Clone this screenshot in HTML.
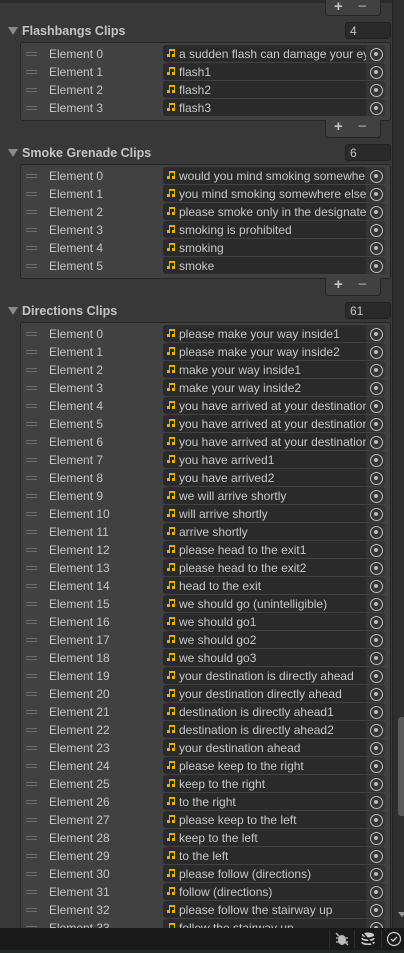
<!DOCTYPE html><html><head><style>
html,body{margin:0;width:404px;height:953px;overflow:hidden}
body{background:#383838;position:relative;font-family:"Liberation Sans",sans-serif;font-size:12px;color:#c4c4c4}
div{box-sizing:border-box}
.a{position:absolute}
.tab{left:0;top:0;width:392px;height:3px;background:#2b2b2b}
.hdr{left:8px;font-weight:bold;font-size:12.5px;color:#c4c4c4}
.hdr:before{content:"";display:inline-block;border-left:5px solid transparent;border-right:5px solid transparent;border-top:8px solid #8a8a8a;margin-right:4px;vertical-align:0px}
.cnt{left:345px;width:46px;height:17px;background:#2a2a2a;border:1px solid #212121;border-radius:3px;padding:1px 0 0 4px}
.box{left:20px;width:371px;background:#414141;border:1px solid #262626;border-radius:3px}
.foot{left:325px;width:56px;height:18px;background:#414141;border:1px solid #262626;border-top:none;border-radius:0 0 4px 4px;font-size:15px;font-weight:bold}
.foot span{position:absolute;top:-2px}
.r{position:absolute;left:0;width:369px;height:18px}
.r .h{position:absolute;left:5px;top:7px;width:11px;height:4px;border-top:1px solid #6e6e6e;border-bottom:1px solid #6e6e6e}
.r .l{position:absolute;left:28px;top:2px}
.r .f{position:absolute;left:142px;top:0;width:222px;height:17px;background:#2a2a2a;border-radius:3px;overflow:hidden;white-space:nowrap;padding:2px 0 0 16px;color:#c8c8c8}
.r .f:before{content:"";position:absolute;left:6px;top:4px;width:6px;height:7px;border-top:2px solid #e8b100;border-left:1.5px solid #e8b100;border-right:1.5px solid #e8b100;box-sizing:border-box}
.r .f:after{content:"";position:absolute;left:4px;top:9px;width:3px;height:3px;background:#e8b100;box-shadow:5px 0 0 #e8b100}
.r .p{position:absolute;left:345px;top:0;width:19px;height:17px;background:#353535;border-radius:0 3px 3px 0}
.r .p:before{content:"";position:absolute;left:4px;top:3px;width:11px;height:11px;border:1px solid #bdbdbd;border-radius:50%}
.r .p:after{content:"";position:absolute;left:7.5px;top:6.5px;width:4px;height:4px;background:#bdbdbd;border-radius:50%}
.ft{position:absolute;left:0;top:928px;width:404px;height:22px;background:#191919}
</style></head><body>
<div class="a tab"></div>
<div class="a" style="left:392px;top:0;width:12px;height:928px;background:#2e2e2e;border-left:1px solid #242424"></div>
<div class="a" style="left:398px;top:717px;width:6px;height:99px;background:#5a5a5a;border-radius:3px 0 0 3px"></div>
<div class="a foot" style="top:0;height:16px"><span style="left:8px">+</span><span style="left:32px;color:#8a8a8a">−</span></div>

<div class="a hdr" style="top:24px">Flashbangs Clips</div>
<div class="a cnt" style="top:22px">4</div>
<div class="a box" style="top:42px;height:79px">
<div class="r" style="top:2px"><div class="h"></div><div class="l">Element 0</div><div class="f">a sudden flash can damage your eyes</div><div class="p"></div></div>
<div class="r" style="top:20px"><div class="h"></div><div class="l">Element 1</div><div class="f">flash1</div><div class="p"></div></div>
<div class="r" style="top:38px"><div class="h"></div><div class="l">Element 2</div><div class="f">flash2</div><div class="p"></div></div>
<div class="r" style="top:56px"><div class="h"></div><div class="l">Element 3</div><div class="f">flash3</div><div class="p"></div></div>
</div>
<div class="a foot" style="top:120px"><span style="left:8px">+</span><span style="left:32px;color:#8a8a8a">−</span></div>

<div class="a hdr" style="top:146px">Smoke Grenade Clips</div>
<div class="a cnt" style="top:144px">6</div>
<div class="a box" style="top:164px;height:115px">
<div class="r" style="top:2px"><div class="h"></div><div class="l">Element 0</div><div class="f">would you mind smoking somewhere else</div><div class="p"></div></div>
<div class="r" style="top:20px"><div class="h"></div><div class="l">Element 1</div><div class="f">you mind smoking somewhere else</div><div class="p"></div></div>
<div class="r" style="top:38px"><div class="h"></div><div class="l">Element 2</div><div class="f">please smoke only in the designated</div><div class="p"></div></div>
<div class="r" style="top:56px"><div class="h"></div><div class="l">Element 3</div><div class="f">smoking is prohibited</div><div class="p"></div></div>
<div class="r" style="top:74px"><div class="h"></div><div class="l">Element 4</div><div class="f">smoking</div><div class="p"></div></div>
<div class="r" style="top:92px"><div class="h"></div><div class="l">Element 5</div><div class="f">smoke</div><div class="p"></div></div>
</div>
<div class="a foot" style="top:278px"><span style="left:8px">+</span><span style="left:32px;color:#8a8a8a">−</span></div>

<div class="a hdr" style="top:304px">Directions Clips</div>
<div class="a cnt" style="top:302px">61</div>
<div class="a box" style="top:322px;height:606px;overflow:hidden;border-bottom:none;border-radius:3px 3px 0 0">
<div class="r" style="top:2px"><div class="h"></div><div class="l">Element 0</div><div class="f">please make your way inside1</div><div class="p"></div></div>
<div class="r" style="top:20px"><div class="h"></div><div class="l">Element 1</div><div class="f">please make your way inside2</div><div class="p"></div></div>
<div class="r" style="top:38px"><div class="h"></div><div class="l">Element 2</div><div class="f">make your way inside1</div><div class="p"></div></div>
<div class="r" style="top:56px"><div class="h"></div><div class="l">Element 3</div><div class="f">make your way inside2</div><div class="p"></div></div>
<div class="r" style="top:74px"><div class="h"></div><div class="l">Element 4</div><div class="f">you have arrived at your destination1</div><div class="p"></div></div>
<div class="r" style="top:92px"><div class="h"></div><div class="l">Element 5</div><div class="f">you have arrived at your destination2</div><div class="p"></div></div>
<div class="r" style="top:110px"><div class="h"></div><div class="l">Element 6</div><div class="f">you have arrived at your destination3</div><div class="p"></div></div>
<div class="r" style="top:128px"><div class="h"></div><div class="l">Element 7</div><div class="f">you have arrived1</div><div class="p"></div></div>
<div class="r" style="top:146px"><div class="h"></div><div class="l">Element 8</div><div class="f">you have arrived2</div><div class="p"></div></div>
<div class="r" style="top:164px"><div class="h"></div><div class="l">Element 9</div><div class="f">we will arrive shortly</div><div class="p"></div></div>
<div class="r" style="top:182px"><div class="h"></div><div class="l">Element 10</div><div class="f">will arrive shortly</div><div class="p"></div></div>
<div class="r" style="top:200px"><div class="h"></div><div class="l">Element 11</div><div class="f">arrive shortly</div><div class="p"></div></div>
<div class="r" style="top:218px"><div class="h"></div><div class="l">Element 12</div><div class="f">please head to the exit1</div><div class="p"></div></div>
<div class="r" style="top:236px"><div class="h"></div><div class="l">Element 13</div><div class="f">please head to the exit2</div><div class="p"></div></div>
<div class="r" style="top:254px"><div class="h"></div><div class="l">Element 14</div><div class="f">head to the exit</div><div class="p"></div></div>
<div class="r" style="top:272px"><div class="h"></div><div class="l">Element 15</div><div class="f">we should go (unintelligible)</div><div class="p"></div></div>
<div class="r" style="top:290px"><div class="h"></div><div class="l">Element 16</div><div class="f">we should go1</div><div class="p"></div></div>
<div class="r" style="top:308px"><div class="h"></div><div class="l">Element 17</div><div class="f">we should go2</div><div class="p"></div></div>
<div class="r" style="top:326px"><div class="h"></div><div class="l">Element 18</div><div class="f">we should go3</div><div class="p"></div></div>
<div class="r" style="top:344px"><div class="h"></div><div class="l">Element 19</div><div class="f">your destination is directly ahead</div><div class="p"></div></div>
<div class="r" style="top:362px"><div class="h"></div><div class="l">Element 20</div><div class="f">your destination directly ahead</div><div class="p"></div></div>
<div class="r" style="top:380px"><div class="h"></div><div class="l">Element 21</div><div class="f">destination is directly ahead1</div><div class="p"></div></div>
<div class="r" style="top:398px"><div class="h"></div><div class="l">Element 22</div><div class="f">destination is directly ahead2</div><div class="p"></div></div>
<div class="r" style="top:416px"><div class="h"></div><div class="l">Element 23</div><div class="f">your destination ahead</div><div class="p"></div></div>
<div class="r" style="top:434px"><div class="h"></div><div class="l">Element 24</div><div class="f">please keep to the right</div><div class="p"></div></div>
<div class="r" style="top:452px"><div class="h"></div><div class="l">Element 25</div><div class="f">keep to the right</div><div class="p"></div></div>
<div class="r" style="top:470px"><div class="h"></div><div class="l">Element 26</div><div class="f">to the right</div><div class="p"></div></div>
<div class="r" style="top:488px"><div class="h"></div><div class="l">Element 27</div><div class="f">please keep to the left</div><div class="p"></div></div>
<div class="r" style="top:506px"><div class="h"></div><div class="l">Element 28</div><div class="f">keep to the left</div><div class="p"></div></div>
<div class="r" style="top:524px"><div class="h"></div><div class="l">Element 29</div><div class="f">to the left</div><div class="p"></div></div>
<div class="r" style="top:542px"><div class="h"></div><div class="l">Element 30</div><div class="f">please follow (directions)</div><div class="p"></div></div>
<div class="r" style="top:560px"><div class="h"></div><div class="l">Element 31</div><div class="f">follow (directions)</div><div class="p"></div></div>
<div class="r" style="top:578px"><div class="h"></div><div class="l">Element 32</div><div class="f">please follow the stairway up</div><div class="p"></div></div>
<div class="r" style="top:596px"><div class="h"></div><div class="l">Element 33</div><div class="f">follow the stairway up</div><div class="p"></div></div>
</div>
<div class="a" style="left:398px;top:912px;border-left:4px solid transparent;border-right:4px solid transparent;border-top:5px solid #999"></div>
<div class="ft"></div>
<div class="a" style="left:0;top:950px;width:404px;height:3px;background:#1e2b27"></div>
<div class="a" style="left:329px;top:930px;width:1px;height:18px;background:#2c2c2c"></div>
<div class="a" style="left:354px;top:930px;width:1px;height:18px;background:#2c2c2c"></div>
<div class="a" style="left:381px;top:930px;width:1px;height:18px;background:#2c2c2c"></div>
<svg class="a" style="left:334px;top:931px" width="16" height="16" viewBox="0 0 16 16"><ellipse cx="8" cy="9" rx="4" ry="5" fill="#bbb"/><path d="M2 2L14 14M2 7h3M11 7h3M2 11h3M11 11h3" stroke="#bbb" stroke-width="1.3"/></svg>
<svg class="a" style="left:360px;top:931px" width="16" height="16" viewBox="0 0 16 16"><ellipse cx="8" cy="4" rx="6" ry="2.5" fill="#ccc"/><path d="M2 7c0 3 12 3 12 0M2 11c0 3 12 3 12 0" stroke="#ccc" stroke-width="1.6" fill="none"/><path d="M3 2L13 14" stroke="#191919" stroke-width="1.5"/></svg>
<svg class="a" style="left:386px;top:931px" width="16" height="16" viewBox="0 0 16 16"><circle cx="8" cy="8" r="6.5" stroke="#ccc" stroke-width="1.2" fill="none"/><path d="M5 8l2 2 4-4" stroke="#ccc" stroke-width="1.3" fill="none"/></svg>
</body></html>
